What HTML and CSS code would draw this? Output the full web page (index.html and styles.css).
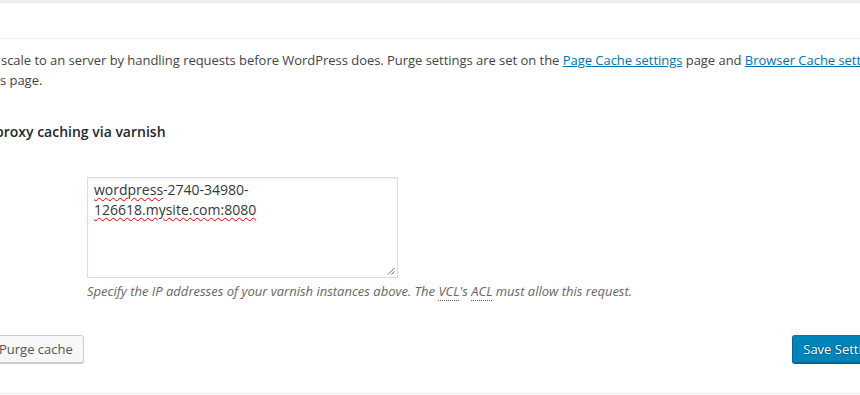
FILE: index.html
```html
<!DOCTYPE html>
<html>
<head>
<meta charset="utf-8">
<link rel="stylesheet" href="styles.css">
</head>
<body>
<div class="page">
  <div class="topband"></div>
  <div class="hndle"></div>
  <div class="inside">
    <p class="intro">
      <span class="l1">scale to an server by handling requests before WordPress does. Purge settings are set on the <a href="#">Page Cache settings</a> page and <a href="#">Browser Cache settings</a> are set on the</span>
      <span class="l2">s page.</span>
    </p>
    <div class="option-label">proxy caching via varnish</div>
    <div class="field">
      <div class="textarea">
        <span class="spell">wordpress</span>-2740-34980-<br><span class="spell">126618.mysite.com:8080</span>
        <svg class="grip" width="8" height="8" viewBox="0 0 8 8"><path d="M1 7.5 L7.5 1 M4.5 7.5 L7.5 4.5" stroke="#666" stroke-width="1" fill="none"/></svg>
      </div>
      <p class="description">Specify the IP addresses of your varnish instances above. The <abbr>VCL</abbr>'s <abbr>ACL</abbr> must allow this request.</p>
    </div>
    <div class="actions">
      <button class="button">Purge cache</button>
      <button class="button button-primary">Save Settings</button>
    </div>
  </div>
  <div class="bottomline"></div>
</div>
</body>
</html>
```

FILE: styles.css
```css
html, body {
  margin: 0;
  padding: 0;
  overflow: hidden;
  background: #fff;
}
body {
  width: 860px;
  height: 395px;
  font-family: "Open Sans", "Noto Sans", sans-serif;
  font-size: 13px;
  color: #444;
}
.page {
  margin-left: -10px;
  width: 905px;
}
.topband {
  height: 2px;
  background: #f1f1f1;
  border-bottom: 1px solid #e5e5e5;
}
.hndle {
  height: 35px;
  border-bottom: 1px solid #eeeeee;
}
.inside {
  padding: 0;
}
.intro {
  margin: 12px 0 0 0;
  line-height: 19.5px;
  letter-spacing: -0.035px;
  white-space: nowrap;
}
.intro .l1 {
  display: block;
  padding-left: 11px;
}
.intro .l2 {
  display: block;
  padding-left: 10px;
}
.intro a {
  color: #0073aa;
  text-decoration: underline;
}
.option-label {
  margin-top: 32px;
  padding-left: 5px;
  font-size: 14px;
  font-weight: 600;
  line-height: 20px;
  color: #23282d;
  white-space: nowrap;
}
.field {
  margin-top: 35px;
  padding-left: 97px;
}
.textarea {
  position: relative;
  box-sizing: border-box;
  width: 311px;
  height: 101px;
  border: 1px solid #dddddd;
  box-shadow: inset 0 1px 2px rgba(0, 0, 0, 0.07);
  padding: 2px 6px;
  font-size: 14px;
  line-height: 19.6px;
  color: #32373c;
  background: #fff;
}
.spell {
  text-decoration: underline wavy #e00000;
  text-decoration-thickness: 1px;
  text-underline-offset: 2px;
}
.grip {
  position: absolute;
  right: 2px;
  bottom: 2px;
}
.description {
  margin: 4px 0 0 0;
  font-style: italic;
  font-size: 13px;
  line-height: 19px;
  color: #666;
  white-space: nowrap;
}
.description abbr {
  text-decoration: none;
  border-bottom: 1px dotted #666;
}
.actions {
  margin-top: 34px;
  margin-left: -2px;
  display: flex;
  justify-content: space-between;
  align-items: flex-start;
  padding-right: 1px;
  height: 28px;
}
.button {
  box-sizing: border-box;
  height: 28px;
  margin: 0;
  padding: 0 10px 1px;
  font-family: "Open Sans", "Noto Sans", sans-serif;
  font-size: 13px;
  line-height: 26px;
  color: #555;
  background: #f7f7f7;
  border: 1px solid #cccccc;
  border-radius: 3px;
  box-shadow: 0 1px 0 #cccccc;
  white-space: nowrap;
}
.button-primary {
  background: #0085ba;
  border-color: #0073aa #006799 #006799;
  box-shadow: 0 1px 0 #006799;
  color: #fff;
  text-shadow: 0 -1px 1px #006799, 1px 0 1px #006799, 0 1px 1px #006799, -1px 0 1px #006799;
}
.bottomline {
  margin-top: 30px;
  border-top: 1px solid #eeeeee;
}
```
